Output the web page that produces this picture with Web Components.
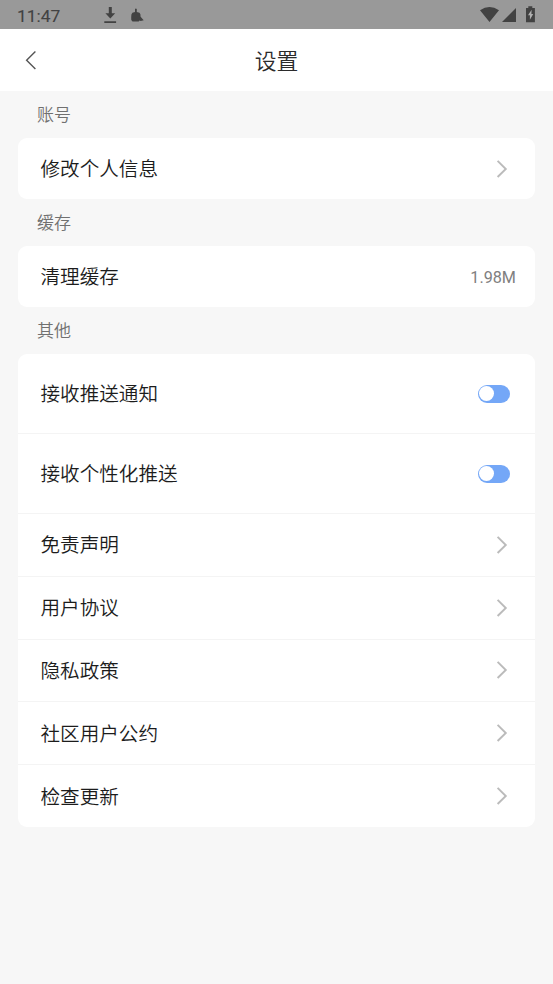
<!DOCTYPE html>
<html lang="zh-CN">
<head>
<meta charset="utf-8">
<title>设置</title>
<style>
  html, body { margin: 0; height: 100%; background: #f7f7f7; }
  body { font-family: Roboto, "Noto Sans CJK SC", sans-serif; color: #2b2b2b; overflow: hidden; }
</style>
</head>
<body>
<settings-page>
  <status-bar time="11:47"></status-bar>
  <nav-header>设置</nav-header>
  <settings-group label="账号">
    <settings-row kind="link" style="--h:61px">修改个人信息</settings-row>
  </settings-group>
  <settings-group label="缓存">
    <settings-row value="1.98M" style="--h:61px">清理缓存</settings-row>
  </settings-group>
  <settings-group label="其他">
    <settings-row kind="toggle" style="--h:80px">接收推送通知</settings-row>
    <settings-row kind="toggle" style="--h:80px">接收个性化推送</settings-row>
    <settings-row kind="link">免责声明</settings-row>
    <settings-row kind="link">用户协议</settings-row>
    <settings-row kind="link">隐私政策</settings-row>
    <settings-row kind="link">社区用户公约</settings-row>
    <settings-row kind="link" style="--h:62px">检查更新</settings-row>
  </settings-group>
</settings-page>
<script>
class Base extends HTMLElement {
  constructor() {
    super();
    this.attachShadow({ mode: "open" });
  }
  connectedCallback() { this.shadowRoot.innerHTML = this.render(); }
}

customElements.define("settings-page", class extends Base {
  render() {
    return `<style>:host{display:flex;flex-direction:column;height:984px;background:#f7f7f7}</style><slot></slot>`;
  }
});

customElements.define("status-bar", class extends Base {
  render() {
    return `<style>
      :host{display:flex;align-items:center;box-sizing:border-box;height:29px;flex:none;padding:0 17px;background:#999;color:#424242}
      .time{font-size:17.4px;line-height:29px;-webkit-text-stroke:.1px #424242;width:86px;padding-top:1.5px;box-sizing:border-box;height:29px}
      svg{display:block;fill:#424242}
      .left{width:50px;height:29px}
      .right{width:60px;height:29px;margin-left:auto;margin-right:-4px}
    </style>
    <span class="time">${this.getAttribute("time")}</span>
    <svg class="left" viewBox="103 0 50 29">
      <path d="M108.8 7h3v6.2h3.4l-4.9 5.3-4.9-5.3h3.4zM104.3 21.2h11.8v1.8h-11.8z"/>
      <path d="M135 9q.9-.9 1.8 0v2.9l2.7.9.9 1.5.2 2.4 3.1 3.5-3 .7-1.2-.5-.8 1.2-6.2-.2q-1.8-1.7-1.3-4.2l.2-2.8 1-1.6 2.6-.9z"/>
    </svg>
    <svg class="right" viewBox="480 0 60 29">
      <path d="M480 10.3Q489.5 3.8 499 10.3L489.5 22zM516 8v14h-14z"/>
      <path d="M528.3 6.2h4v1.9h2.6v14.1h-8.9V8.1h2.3z"/>
      <path fill="#b0b0b0" d="M531.6 9.8l-3.6 5.5h1.9v4.5l3.3-5.8h-1.8z"/>
    </svg>`;
  }
});

customElements.define("nav-header", class extends Base {
  render() {
    return `<style>
      :host{display:grid;grid-template-columns:60px 1fr 60px;align-items:center;height:62px;flex:none;background:#fff}
      svg{display:block;width:12px;height:20px;margin-left:25px}
      .title{text-align:center;font-size:21.8px;font-weight:350;line-height:62px;padding-top:2px;height:62px;box-sizing:border-box;color:#2b2b2b}
    </style>
    <svg viewBox="0 0 12 20" fill="none" stroke="#555" stroke-width="1.4"><path d="M10.4 1.6 1.6 10.2l8.8 8.7"/></svg>
    <span class="title"><slot></slot></span>`;
  }
});

customElements.define("settings-group", class extends Base {
  render() {
    return `<style>
      :host{display:block;flex:none}
      .label{box-sizing:border-box;height:47px;line-height:47px;padding:1px 0 0 37px;font-size:17px;font-weight:350;color:#707070}
      .card{margin:0 18px;background:#fff;border-radius:9px;overflow:hidden}
    </style>
    <div class="label">${this.getAttribute("label")}</div>
    <div class="card"><slot></slot></div>`;
  }
});

customElements.define("toggle-switch", class extends Base {
  render() {
    return `<style>
      :host{display:flex;align-items:center;box-sizing:border-box;width:32px;height:18px;padding-left:1.2px;border-radius:9px;background:#74a7f7}
      i{width:15px;height:15px;border-radius:50%;background:#fff}
    </style><i></i>`;
  }
});

customElements.define("settings-row", class extends Base {
  render() {
    const kind = this.getAttribute("kind");
    let end = `<span class="value">${this.getAttribute("value") || ""}</span>`;
    if (kind === "link") end = `<svg viewBox="0 0 12 18" fill="none" stroke="#bbb" stroke-width="1.9"><path d="M1.6 .9 9.8 9l-8.2 8"/></svg>`;
    if (kind === "toggle") end = `<toggle-switch></toggle-switch>`;
    return `<style>
      :host{display:flex;align-items:center;justify-content:space-between;box-sizing:border-box;height:var(--h,62.75px);padding:0 19px 0 22.5px;border-bottom:1px solid #f4f4f4;font-size:19.6px}
      :host(:last-child){border-bottom:0}
      .name{font-weight:350;color:#1c1c1c;padding-bottom:2px}
      svg{display:block;width:12px;height:18px;margin-right:8px}
      toggle-switch{margin-right:6px}
      .value{font-size:16.2px;color:#808080;padding-top:2px}
    </style>
    <span class="name"><slot></slot></span>${end}`;
  }
});
</script>
</body>
</html>
